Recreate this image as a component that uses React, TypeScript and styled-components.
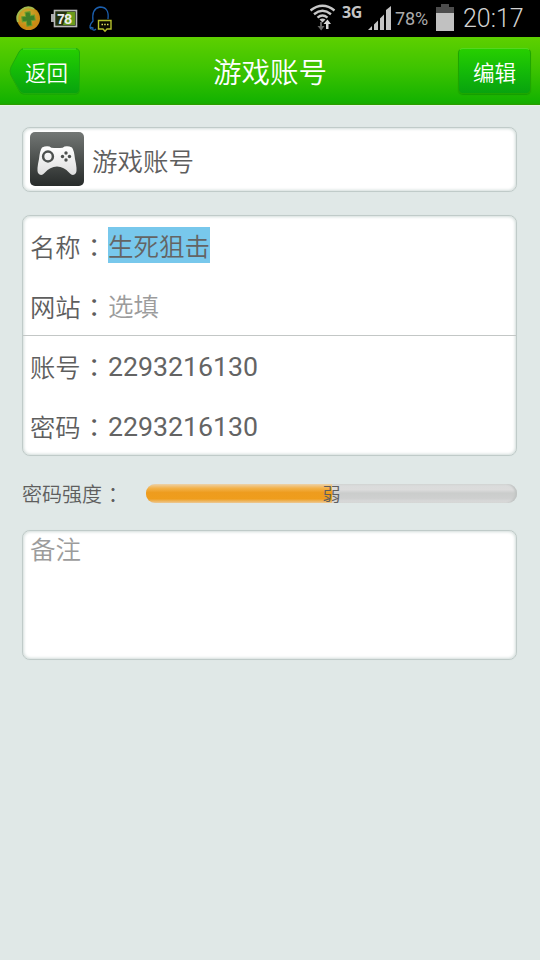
import React from 'react';
import styled, { createGlobalStyle } from 'styled-components';

const Global = createGlobalStyle`
  * { box-sizing: border-box; }
  body {
    margin: 0;
    background: #e0e8e7;
    color: #5e5e5e;
    font-family: Roboto, "Noto Sans CJK SC", sans-serif;
    font-weight: 350;
  }
`;

const Screen = styled.div`
  width: 540px;
  height: 960px;
  overflow: hidden;
  background: #e0e8e7;
`;

const StatusBar = styled.div`
  height: 37px;
  background: #000;
  display: flex;
  justify-content: space-between;
  color: #c4c4c4;
`;

const StatusLeft = styled.div`
  padding: 5px 0 0 16px;
`;

const StatusRight = styled.div`
  display: flex;
  align-items: flex-start;
  padding-right: 17px;
`;

const Network = styled.span`
  width: 26px;
  margin-top: 3px;
  font: 700 16px/19px "Noto Sans", sans-serif;
  letter-spacing: -0.4px;
`;

const Percent = styled.span`
  width: 45px;
  padding-left: 4px;
  font-size: 18px;
  line-height: 38px;
  letter-spacing: -0.1px;
  font-weight: 400;
  color: #acacac;
`;

const Clock = styled.span`
  width: 60px;
  margin-left: 8px;
  font-size: 25px;
  line-height: 38px;
  white-space: nowrap;
  font-weight: 300;
  color: #d2d2d2;
`;

const Header = styled.header`
  height: 68px;
  display: grid;
  grid-template-columns: 73px 1fr 73px;
  padding: 0 9px 0 8px;
  background: linear-gradient(#5ed000, #3fc400 45%, #16b300 94%, #18aa00);
  border-bottom: 1px solid #2c9c00;
  box-shadow: 0 1px 0 #e4f5e4;
`;

const Title = styled.h1`
  margin: 0;
  padding: 3px 0 0 1px;
  color: #fff;
  text-align: center;
  font-size: 28.5px;
  line-height: 68px;
  font-weight: 350;
`;

const EditButton = styled.button`
  width: 73px;
  height: 46px;
  margin: 11px 0 0 0;
  padding: 0;
  border: 1px solid #1ea600;
  border-top-color: #55d820;
  border-radius: 5px;
  background: linear-gradient(#27cf00, #14ba08 50%, #08a30e);
  box-shadow: 0 1px 1px rgba(0, 100, 0, 0.3);
  color: #fff;
  font: 350 21.5px/46px "Noto Sans CJK SC", sans-serif;
`;

const BackButton = styled.button`
  position: relative;
  width: 73px;
  height: 47px;
  margin: 11px 0 0 0;
  padding: 0 0 0 4px;
  border: 0;
  background: none;
  color: #fff;
  font: 350 21.5px/47px "Noto Sans CJK SC", sans-serif;
  svg { position: absolute; left: 0; top: 0; }
  span { position: relative; }
`;

const Form = styled.main`
  display: flex;
  flex-direction: column;
  padding: 22px 23px 0 22px;
`;

const Panel = styled.section<{ $h: number; $gap?: number }>`
  height: ${(p) => p.$h}px;
  margin-bottom: ${(p) => p.$gap ?? 0}px;
  border: 1px solid #c0cbc9;
  border-radius: 8px;
  background: #fff;
  box-shadow: inset 0 0 3px 1px #d2dcda, 0 0 1px #d2dcda;
`;

const Category = styled(Panel)`
  display: flex;
  align-items: center;
  padding: 0 0 1px 7px;
  gap: 8px;
  font-size: 25.5px;
  line-height: 60px;
  span { margin-top: 5px; }
`;

const Row = styled.div<{ $line?: boolean }>`
  height: 60px;
  display: flex;
  align-items: center;
  padding-left: 7px;
  ${(p) => p.$line && 'border-bottom: 1px solid #c3c7c6;'}
`;

const Label = styled.span`
  width: 78px;
  flex: none;
  display: flex;
  font: 350 25.3px/36px "Noto Sans CJK SC", sans-serif;
`;

const Colon = styled.span`
  margin-left: 1px;
  font-family: "Noto Sans CJK TC", sans-serif;
  font-weight: 400;
`;

const Value = styled.span<{ $selected?: boolean; $hint?: boolean }>`
  font-size: ${(p) => (p.$selected || p.$hint ? 25.5 : 26.7)}px;
  line-height: ${(p) => (p.$selected ? 40 : p.$hint ? 38 : 36)}px;
  height: 36px;
  margin-top: ${(p) => (p.$selected ? -2 : p.$hint ? 0 : 2)}px;
  font-weight: ${(p) => (p.$selected || p.$hint ? 350 : 400)};
  color: ${(p) => (p.$hint ? '#9c9c9c' : '#646464')};
  background: ${(p) => (p.$selected ? '#78c8ec' : 'transparent')};
`;

const Strength = styled.div`
  display: flex;
  align-items: center;
  height: 28px;
  margin: -1px 0 23px;
`;

const StrengthLabel = styled.span`
  width: 124px;
  display: flex;
  font-size: 20px;
  line-height: 30px;
  padding-top: 3px;
`;

const Track = styled.div`
  display: grid;
  grid-template-rows: 19px;
  flex: 1;
  height: 19px;
  border-radius: 9px;
  background: linear-gradient(#d9dbdb, #dcdcdc 30%, #cbcdcc 48%, #cecfcf 75%, #dedede);
  box-shadow: inset -2px 0 2px #c0c4c3;
`;

const Fill = styled.div`
  grid-area: 1 / 1;
  height: 19px;
  border-radius: 9px 0 0 9px;
  background: linear-gradient(#ecd2ab, #f3b24a 22%, #ee9c1e 45%, #ef9d1c 78%, #ecc894);
`;

const Level = styled.span`
  grid-area: 1 / 1;
  align-self: center;
  text-align: center;
  font: 350 18px/27px "Noto Sans CJK SC", sans-serif;
`;

const Memo = styled(Panel)`
  padding: 0 7px;
  font-size: 25.5px;
  line-height: 38px;
  color: #9c9c9c;
`;

const StatusIcons = () => (
  <svg width="100" height="30" viewBox="16 5 100 30">
    <defs>
      <radialGradient id="coin" cx="42%" cy="36%">
        <stop offset="0" stopColor="#c9b638" />
        <stop offset="1" stopColor="#c98a14" />
      </radialGradient>
    </defs>
    <circle cx="28.5" cy="18.5" r="11.5" fill="url(#coin)" />
    <path d="M18 22A11 11 0 0 1 34 9" stroke="#a1b94c" strokeWidth="2" fill="none" />
    <path d="M26 12h5v4h4v5h-4v5h-5v-5h-4v-5h4z" fill="#3f7f28" stroke="#6e9f2a" transform="rotate(-8 28 19)" />
    <rect x="54.5" y="10.5" width="22" height="16" fill="#24310f" stroke="#b9b9b9" strokeWidth="1.6" />
    <rect x="51" y="14" width="3" height="8" fill="#aaa" />
    <path d="M67 12h8v13h-12z" fill="#6b9a1c" />
    <text x="57" y="23.500" fontFamily="Liberation Sans" fontSize="14" fontWeight="700" fill="#eee" textLength="15">78</text>
    <path d="M96 29c-2 2-4 1-3-1-2-1-2-1-2 1-2-1-1-5 2-8-1-8 1-13 7-14 6 0 9 4 8 12" fill="none" stroke="#1b5fae" strokeWidth="1.300" />
    <path d="M98.500 20.500h12.500v8.500h-4l-2 2.300-2-2.300h-4.500z" fill="#0a0a00" stroke="#b6bf2c" strokeWidth="1.400" />
    <path d="M101.500 24.500h1.500M104.200 24.500h1.500M107 24.500h1.500" stroke="#dfe060" strokeWidth="1.600" />
  </svg>
);

const Wifi = () => (
  <svg width="32" height="36" viewBox="310 0 32 36">
    <g fill="none" stroke="#c8c8c8" strokeWidth="2.400">
      <path d="M310.500 10.500Q322.500 1 334.500 10.500" />
      <path d="M314 14.200Q322.500 7.500 331 14.200" />
      <path d="M317.500 17.600Q322.500 13.500 327.500 17.600" />
    </g>
    <path d="M319.500 19.500q3-2 6 0l-3 3z" fill="#c8c8c8" />
    <path d="M320 22v4h-2.500l3.700 4.500 3.300-4.500H322v-4z" fill="#666" />
    <path d="M326 29v-5h-2.500l4-4.500 3.500 4.500h-2.500v5z" fill="#d8d8d8" />
  </svg>
);

const Signal = () => (
  <svg width="23" height="36" viewBox="368 0 23 36" fill="#c4c4c4">
    <path d="M368 30l4-4v4zM374 24.500l4-4V30h-4zM380 18.500l4-4V30h-4zM386 10l5-4v24h-5z" />
  </svg>
);

const Battery = () => (
  <svg width="19" height="36" viewBox="436 0 19 36">
    <path d="M441 4h8v3h5v7h-18V7h5z" fill="#4d4d4d" />
    <rect x="436" y="13" width="18" height="18" fill="#c1c1c1" />
  </svg>
);

const BackShape = () => (
  <svg width="73" height="48" viewBox="0 0 73 48">
    <defs>
      <linearGradient id="back" x2="0" y2="1">
        <stop offset="0" stopColor="#27cf00" />
        <stop offset=".5" stopColor="#14ba08" />
        <stop offset="1" stopColor="#08a30e" />
      </linearGradient>
    </defs>
    <path d="M16 1.500H67Q71.500 1.500 71.500 6V42Q71.500 46.500 67 46.500H16Q13 46.500 11 43L3 28Q1 24 3 20L11 5Q13 1.500 16 1.500Z" fill="#108f06" opacity=".6" />
    <path d="M16 .5H67Q71.500 .5 71.500 5V41Q71.500 45.500 67 45.500H16Q13 45.500 11 42L3 27Q1 23 3 19L11 4Q13 .5 16 .5Z" fill="url(#back)" stroke="#1fab0a" />
    <path d="M15 1H68" stroke="#5be02b" />
  </svg>
);

const Gamepad = () => (
  <svg width="54" height="54" viewBox="0 0 54 54">
    <defs>
      <linearGradient id="tile" x2="0" y2="1">
        <stop offset="0" stopColor="#737775" />
        <stop offset=".5" stopColor="#4c504e" />
        <stop offset="1" stopColor="#272b2a" />
      </linearGradient>
      <linearGradient id="pad" x2="0" y2="1">
        <stop offset="0" stopColor="#fff" />
        <stop offset="1" stopColor="#dedede" />
      </linearGradient>
    </defs>
    <rect width="54" height="54" rx="5" fill="url(#tile)" />
    <path d="M12 15.500Q16 13.500 19.500 14.500Q21 16 24 16H30Q33 16 34.500 14.500Q38 13.500 42 15.500Q44 18 45 27Q47.500 38 46 41Q43 45 39.500 41Q34 34.500 27 34.500Q20 34.500 14.500 41Q11 45 8 41Q6.500 38 9 27Q10 18 12 15.500Z" fill="url(#pad)" />
    <circle cx="18" cy="24.500" r="4.900" fill="none" stroke="#4c504e" strokeWidth="2.500" />
    <g fill="#4c504e">
      <circle cx="36" cy="21" r="1.700" /><circle cx="36" cy="28" r="1.700" />
      <circle cx="32.500" cy="24.500" r="1.700" /><circle cx="39.500" cy="24.500" r="1.700" />
    </g>
  </svg>
);

const fields = [
  { label: '名称', value: '生死狙击', selected: true },
  { label: '网站', value: '选填', hint: true, line: true },
  { label: '账号', value: '2293216130' },
  { label: '密码', value: '2293216130' },
];

export default function App() {
  return (
    <Screen>
      <Global />
      <StatusBar>
        <StatusLeft><StatusIcons /></StatusLeft>
        <StatusRight>
          <Wifi />
          <Network>3G</Network>
          <Signal />
          <Percent>78%</Percent>
          <Battery />
          <Clock>20:17</Clock>
        </StatusRight>
      </StatusBar>
      <Header>
        <BackButton><BackShape /><span>返回</span></BackButton>
        <Title>游戏账号</Title>
        <EditButton>编辑</EditButton>
      </Header>
      <Form>
        <Category $h={65} $gap={23}>
          <Gamepad />
          <span>游戏账号</span>
        </Category>
        <Panel $h={241} $gap={24}>
          {fields.map((f) => (
            <Row key={f.label} $line={f.line}>
              <Label>{f.label}<Colon lang="zh-TW">：</Colon></Label>
              <Value $selected={f.selected} $hint={f.hint}>{f.value}</Value>
            </Row>
          ))}
        </Panel>
        <Strength>
          <StrengthLabel>密码强度<Colon lang="zh-TW">：</Colon></StrengthLabel>
          <Track>
            <Fill style={{ width: '50%' }} />
            <Level>弱</Level>
          </Track>
        </Strength>
        <Memo $h={130}>备注</Memo>
      </Form>
    </Screen>
  );
}
